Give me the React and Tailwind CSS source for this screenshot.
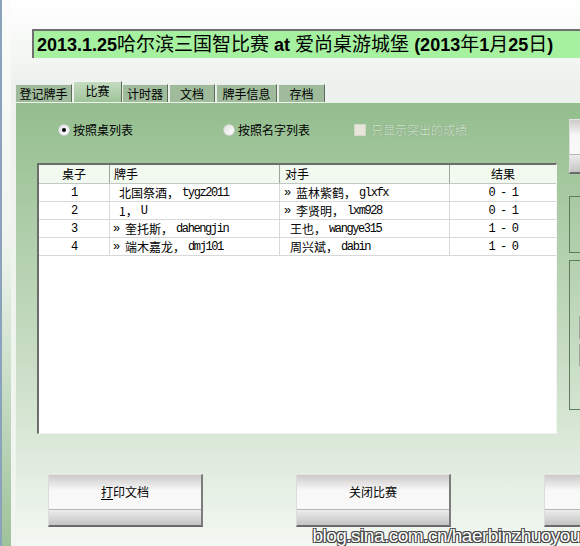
import React from "react";

// 比赛页：按桌列出对阵和结果
const TABS = [
  { label: "登记牌手", w: "w-[57px]" },
  { label: "比赛", w: "w-[49px]", active: true },
  { label: "计时器", w: "w-[46px]" },
  { label: "文档", w: "w-[46px]" },
  { label: "牌手信息", w: "w-[61px]" },
  { label: "存档", w: "w-[47px]" },
];

const ROWS = [
  { table: "1", p: { mark: false, name: "北国祭酒", id: "tygz2011" }, o: { mark: true, name: "蓝林紫鹤", id: "glxfx" }, res: "0 - 1" },
  { table: "2", p: { mark: false, name: "1", id: "U" }, o: { mark: true, name: "李贤明", id: "lxm928" }, res: "0 - 1" },
  { table: "3", p: { mark: true, name: "奎托斯", id: "dahengjin" }, o: { mark: false, name: "王也", id: "wangye315" }, res: "1 - 0" },
  { table: "4", p: { mark: true, name: "端木嘉龙", id: "dmj101" }, o: { mark: false, name: "周兴斌", id: "dabin" }, res: "1 - 0" },
];

const cjk = "font-['Noto_Sans_CJK_SC',sans-serif]";
const mono = "font-['Liberation_Mono','Noto_Sans_CJK_SC',monospace] text-[12px] tracking-[-1.4px]";

function Player({ p }) {
  return (
    <div className="flex items-center whitespace-nowrap">
      {p.mark ? (
        <span className={`${mono} w-[12px] shrink-0`}>»</span>
      ) : (
        <span className="w-[6px] shrink-0" />
      )}
      <span>{p.name}，</span>
      <span className={`${mono} ml-[3px]`}>{p.id}</span>
    </div>
  );
}

function Button({ children, className = "" }) {
  return (
    <div className={`flex flex-col shrink-0 border-t border-l border-t-[#e4e4e4] border-l-[#dcdcdc] border-r-2 border-b-2 border-r-[#7c7c7c] border-b-[#6a6a6a] ${className}`}>
      <div className="h-[34px] flex items-center justify-center bg-gradient-to-b from-[#cdc9c9] via-[#f8f8f8] via-45% to-[#f9f9f9]">
        {children}
      </div>
      <div className="h-px bg-[#b6b6b6]" />
      <div className="flex-1 bg-gradient-to-b from-[#ededed] to-[#c5c4c4]" />
    </div>
  );
}

function Radio({ checked }) {
  return (
    <span className="w-[12px] h-[12px] rounded-full border border-[#c8d0c8] bg-gradient-to-br from-[#e2e2e2] to-white flex items-center justify-center shrink-0">
      {checked && <span className="w-[4px] h-[4px] rounded-full bg-black" />}
    </span>
  );
}

export default function App() {
  return (
    <div className={`w-[580px] h-[546px] overflow-hidden relative flex text-[12px] text-black ${cjk}`}>
      {/* 窗口左边框 */}
      <div className="w-[2px] shrink-0 bg-[#8aa2bc]" />
      <div className="w-[9px] shrink-0 bg-gradient-to-b from-[#fbfcfb] via-[#eef4ed] via-45% to-[#9ec29a]" />

      <div className="flex-1 min-w-0 flex flex-col bg-gradient-to-b from-white via-[#eef2ee] via-15% to-[#f1f6f0]">
        {/* 标题 */}
        <div className="h-[81px] shrink-0 pt-[29px] pl-[21px]">
          <div className="w-[600px] h-[29px] bg-[#a6f1a0] border-t-2 border-l-2 border-[#6e6e6e] flex items-center pl-[3px] text-[18px] font-['Liberation_Sans','Noto_Sans_CJK_SC',sans-serif] whitespace-nowrap leading-none">
            <span className="font-bold">2013.1.25</span>
            <span className="text-[19px]">哈尔滨三国智比赛</span>
            <span className="font-bold">&nbsp;at&nbsp;</span>
            <span className="text-[19px]">爱尚桌游城堡</span>
            <span className="font-bold">&nbsp;(2013</span>
            <span className="text-[19px]">年</span>
            <span className="font-bold">1</span>
            <span className="text-[19px]">月</span>
            <span className="font-bold">25</span>
            <span className="text-[19px]">日</span>
            <span className="font-bold">)</span>
          </div>
        </div>

        {/* 选项卡 */}
        <div className="h-[21px] shrink-0 flex items-end pl-[4px]">
          {TABS.map((t) =>
            t.active ? (
              <div
                key={t.label}
                className={`${t.w} h-[21px] flex items-center justify-center pb-[2px] bg-gradient-to-b from-[#c4dbc0] to-[#9fc499] border-t border-l border-[#f2f6f2] border-r border-r-[#5d6b5b]`}
              >
                {t.label}
              </div>
            ) : (
              <div
                key={t.label}
                className={`${t.w} h-[18px] flex items-center justify-center bg-[#9fbb9b] border-t border-l border-[#e8eee6] border-r border-r-[#5d6b5b] mr-px`}
              >
                {t.label}
              </div>
            )
          )}
        </div>

        {/* 内容面板 */}
        <div className="ml-[4px] w-[580px] flex-1 flex flex-col border-l border-t border-[#eef4ec] bg-gradient-to-b from-[#94be8e] via-[#c6dbc2] via-55% to-[#f3f8f2]">
          <div className="flex">
            <div className="w-[540px] shrink-0 pt-[17px]">
              <div className="h-[20px] flex items-center pl-[42px]">
                <div className="w-[165px] flex items-center gap-[3px]">
                  <Radio checked />
                  <span>按照桌列表</span>
                </div>
                <div className="w-[131px] flex items-center gap-[3px]">
                  <Radio />
                  <span>按照名字列表</span>
                </div>
                <div className="flex items-center gap-[5px]">
                  <span className="w-[12px] h-[12px] bg-[#e8e6d8] border border-[#d4d8cc]" />
                  <span className="text-[#c8dcc4] [text-shadow:0_0_1px_#6f8e6b]">只显示突出的成绩</span>
                </div>
              </div>

              {/* 对阵表 */}
              <div className="mt-[23px] ml-[21px] w-[520px] h-[271px] bg-white border-t-2 border-l-2 border-[#6c6c6c] border-r border-b border-r-[#f4f4f4] border-b-[#eef2ee]">
                <div className="h-[19px] flex bg-[#f2f9ef] border-b border-[#c4c8c4]">
                  <div className="w-[71px] flex items-center justify-center border-r border-[#9ea69c]">桌子</div>
                  <div className="w-[170px] flex items-center pl-[4px] border-r border-[#9ea69c]">牌手</div>
                  <div className="w-[170px] flex items-center pl-[5px] border-r border-[#9ea69c]">对手</div>
                  <div className="flex-1 flex items-center justify-center">结果</div>
                </div>
                {ROWS.map((r) => (
                  <div key={r.table} className="h-[18px] flex border-b border-[#d8d8d8]">
                    <div className={`w-[71px] flex items-center justify-center border-r border-[#d8d8d8] ${mono}`}>{r.table}</div>
                    <div className="w-[170px] flex items-center pl-[3px] border-r border-[#d8d8d8]">
                      <Player p={r.p} />
                    </div>
                    <div className="w-[170px] flex items-center pl-[4px] border-r border-[#d8d8d8]">
                      <Player p={r.o} />
                    </div>
                    <div className={`flex-1 flex items-center justify-center ${mono}`}>{r.res}</div>
                  </div>
                ))}
              </div>
            </div>

            {/* 右侧按钮与分组框 */}
            <div className="ml-[13px] pt-[16px] flex flex-col">
              <Button className="w-[60px] h-[55px]" />
              <div className="mt-[22px] w-[60px] h-[57px] border border-[#5e7c5b]" />
              <div className="mt-[7px] w-[60px] h-[150px] border border-[#5e7c5b] pt-[55px] pl-[9px] flex flex-col gap-[5px]">
                <div className="h-[23px] w-[30px] border-l border-t border-[#9aa49a] bg-[#dce9da]" />
                <div className="h-[22px] w-[30px] border-l border-t border-[#9aa49a] bg-[#dfeadd]" />
              </div>
            </div>
          </div>

          {/* 底部按钮 */}
          <div className="mt-[40px] pl-[32px] flex gap-[93px]">
            <Button className="w-[155px] h-[53px]">
              <span>
                <span className="underline underline-offset-2">打</span>印文档
              </span>
            </Button>
            <Button className="w-[155px] h-[53px]">
              <span>关闭比赛</span>
            </Button>
            <Button className="w-[155px] h-[53px]" />
          </div>
        </div>
      </div>

      {/* 水印 */}
      <div className="absolute right-0 bottom-[-4px] text-[19px] tracking-[-0.5px] text-white font-['Liberation_Sans',sans-serif] [text-shadow:-1px_-1px_0_#444,1px_-1px_0_#444,-1px_1px_0_#444,1px_1px_0_#444]">
        blog.sina.com.cn/haerbinzhuoyou
      </div>
    </div>
  );
}
